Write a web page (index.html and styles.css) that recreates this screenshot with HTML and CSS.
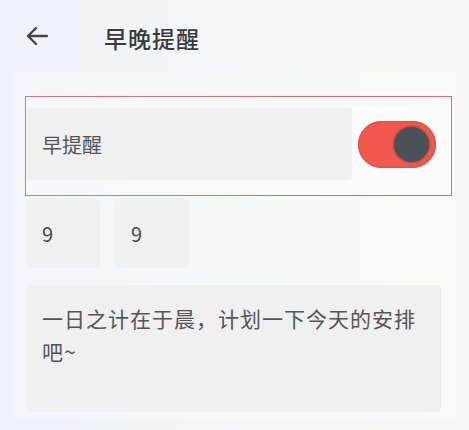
FILE: index.html
```html
<!DOCTYPE html>
<html lang="zh">
<head>
<meta charset="utf-8">
<title>早晚提醒</title>
<link rel="stylesheet" href="styles.css">
</head>
<body>
<div class="page">
  <header class="header">
    <svg class="back" width="22" height="20" viewBox="0 0 22 20" aria-hidden="true">
      <path d="M21 10 H2 M10 2 L2 10 L10 18" fill="none" stroke="#454545" stroke-width="2.4" stroke-linecap="round" stroke-linejoin="round"/>
    </svg>
    <h1 class="title">早晚提醒</h1>
  </header>
  <main class="card">
    <section class="switch-row">
      <div class="label-box">早提醒</div>
      <div class="toggle"><span class="knob"></span></div>
    </section>
    <section class="time-row">
      <div class="num-box">9</div>
      <div class="num-box">9</div>
    </section>
    <section class="note">一日之计在于晨，计划一下今天的安排吧~</section>
  </main>
</div>
</body>
</html>
```
FILE: styles.css
```css
html, body {
  margin: 0;
  padding: 0;
}
body {
  width: 469px;
  height: 430px;
  overflow: hidden;
  background: linear-gradient(90deg, #edf3f8 0%, #f4f6f7 50%, #f9f8f5 100%);
  font-family: "Noto Sans CJK SC", "Noto Sans", sans-serif;
  color: #555;
}
.page {
  display: flex;
  flex-direction: column;
}
.header {
  height: 72px;
  display: flex;
  align-items: center;
  padding-left: 26px;
}
.back {
  display: block;
}
.title {
  margin: 0 0 0 56px;
  font-size: 23px;
  font-weight: 500;
  letter-spacing: 1px;
  color: #3a3a3a;
  line-height: 1;
  padding-top: 4px;
}
.card {
  margin: 0 12px;
  padding: 24px 13px 7px;
  background: rgba(255, 255, 255, 0.3);
  border-radius: 4px;
  display: flex;
  flex-direction: column;
}
.switch-row {
  display: flex;
  align-items: center;
  border: 1.5px solid #d97273;
  padding: 11px 15px 15px 1px;
  width: 427px;
  box-sizing: border-box;
  background: rgba(255, 255, 255, 0.3);
}
.label-box {
  width: 325px;
  height: 72px;
  background: #f0f0f0;
  border-radius: 4px;
  display: flex;
  align-items: center;
  padding-left: 15px;
  box-sizing: border-box;
  font-size: 20px;
  color: #555;
}
.toggle {
  margin-left: 6px;
  width: 78px;
  height: 47px;
  border-radius: 24px;
  background: #f1584e;
  box-shadow: inset 0 0 0 1.5px #dc554c;
  display: flex;
  align-items: center;
  justify-content: flex-end;
  padding-right: 7px;
  box-sizing: border-box;
}
.knob {
  width: 35px;
  height: 35px;
  border-radius: 50%;
  background: #4a5157;
  box-shadow: 0 0 0 1.5px #c64c43;
}
.time-row {
  display: flex;
  gap: 15px;
  margin-top: 2px;
  padding-left: 1px;
}
.num-box {
  width: 74px;
  height: 70px;
  background: #f0f0f0;
  border-radius: 6px;
  display: flex;
  align-items: center;
  padding-left: 16px;
  box-sizing: border-box;
  font-size: 20px;
  color: #4a4a4a;
}
.note {
  margin-top: 17px;
  margin-left: 2px;
  width: 414px;
  height: 127px;
  box-sizing: border-box;
  background: #f0f0f0;
  border-radius: 4px;
  padding: 17px 20px 0 15px;
  font-size: 21px;
  letter-spacing: 1px;
  line-height: 33px;
  color: #555;
}
```
